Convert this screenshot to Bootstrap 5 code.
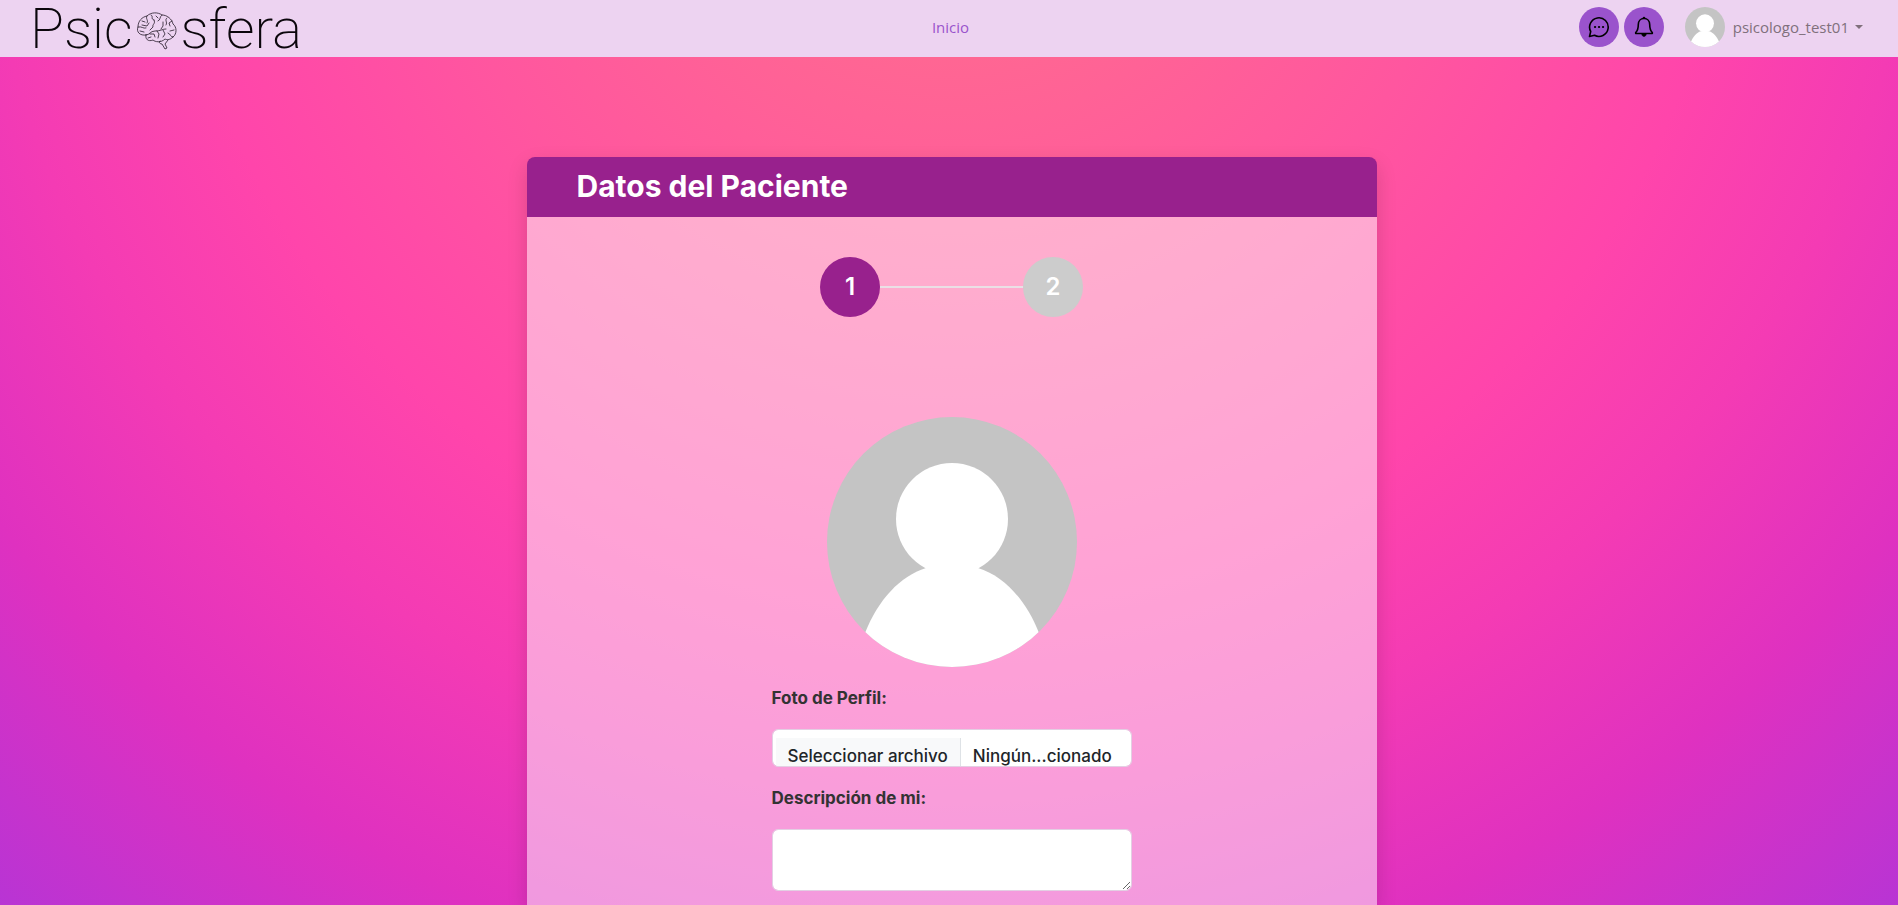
<!DOCTYPE html>
<html lang="es">
<head>
<meta charset="utf-8">
<meta name="viewport" content="width=device-width, initial-scale=1">
<title>Psicosfera - Datos del Paciente</title>
<link href="https://cdn.jsdelivr.net/npm/bootstrap@5.3.0/dist/css/bootstrap.min.css" rel="stylesheet">
<style>
  body {
    font-family: Inter, "Liberation Sans", sans-serif;
    color: #333;
    background: radial-gradient(circle at 50% -20.71%, #ff7480 0, #ff6693 17%, #ff569f 36%, #ff45ab 54%, #f43bb4 67%, #df31c0 82%, #b834d4 100%) fixed;
  }
  .topbar { background: #edd3f1; height: 57px; padding: 0 35px 3px 30px; font-family: "Open Sans", sans-serif; font-size: 15px; }
  .topbar-side { flex: 1 1 0; }
  .brand { color: #0b060c; font-family: Roboto, sans-serif; font-weight: 200; font-size: 56px; line-height: 56px; padding-top: 3px; }
  .brand:hover { color: #0b060c; }
  .brand svg { width: 42px; height: 38px; margin: 4px 3px 0; }
  .link-home { color: #9a53cc; margin-left: 8px; }
  .round-btn { width: 40px; height: 40px; background: #9a53cc; color: #000; }
  .round-btn:hover { background: #8844bb; }
  .round-btn + .round-btn { margin-left: 5px; }
  .user-menu { color: #80707c; font-size: 15px; margin-left: 21px; }
  .user-menu::after { margin-left: 6px; }
  .patient-page { padding-left: 5px; }
  .patient-card { width: 850px; max-width: 100%; margin-top: 100px; border-radius: 8px 8px 0 0; box-shadow: 0 8px 20px rgba(0, 0, 0, .15); overflow: hidden; }
  .patient-head { background: #98218d; min-height: 60px; padding: 0 50px 2px; }
  .patient-head h1 { font-size: 30px; font-weight: 700; }
  .patient-body { background: rgba(255, 255, 255, .5); padding: 40px 50px 14px; }
  .step-dot { width: 60px; height: 60px; background: #ccc; color: #fff; font-size: 24px; font-weight: 600; }
  .step-dot.is-current { background: #98218d; }
  .step-line { width: 143px; height: 2px; background: #eadfe5; }
  .portrait { width: 250px; height: 250px; margin-top: 100px; }
  .patient-form { width: 360px; max-width: 100%; font-size: 17px; padding-top: 19px; }
  .field-label { font-weight: 700; font-size: 17px; line-height: 24px; margin-bottom: 19px; }
  .patient-form .form-control { border-color: #e3cfe3; border-radius: 6px; }
  .file-box { height: 38px; padding: 8px 3px 0; margin-bottom: 19px; cursor: pointer; font-weight: 500; font-size: 17px; overflow: hidden; line-height: 36px; }
  .file-pick { background: #f8f9fa; border-right: 1px solid #dee2e6; padding: 0 12px; color: #212529; }
  .file-name { padding-left: 12px; }
  .about-box { height: 62px; min-height: 62px; }
</style>
</head>
<body class="min-vh-100 d-flex flex-column">

<nav class="topbar d-flex align-items-center" aria-label="Principal">
  <div class="topbar-side d-flex">
    <a class="brand d-flex align-items-center text-decoration-none" href="#">
      <span>Psic</span>
      <svg viewBox="0 0 42 38" fill="none" stroke="#241a28" stroke-width=".8" stroke-linecap="round" stroke-linejoin="round" role="img" aria-label="o">
        <path d="M10 23C4 24 0 20 2 15C2 9 6 5 11 4C15 0 22 0 26 3C31 3 36 7 37 12C41 15 41 22 37 25C34 28 31 28 29 27C25 31 19 30 17 28C12 30 9 27 10 23Z"/>
        <path d="M24 29C22 30 24 32 26 32L29 37L31 36L29 32L32 28M10 23C14 23 14 19 19 19C25 19 26 17 30 17M11 4C9 7 13 8 11 11M2 15C6 14 7 17 10 16M6 9L9 10M4 19L8 20M15 3C18 4 14 7 18 8M26 3C23 5 25 8 22 9M18 8C20 12 16 12 17 15L14 18M27 10L27 14L25 17M31 6C28 8 32 10 30 13M36 9L33 11L34 14M6 13L11 14L13 11M20 4L22 6M14 22L18 22L19 25M21 19L23 22L22 26M27 18L29 22L27 25M37 25C34 25 35 22 32 21M38 18L34 19M12 26L15 25"/>
      </svg>
      <span>sfera</span>
    </a>
  </div>
  <a class="link-home text-decoration-none" href="#">Inicio</a>
  <div class="topbar-side d-flex align-items-center justify-content-end">
    <button type="button" class="round-btn btn rounded-circle border-0 p-0 d-flex align-items-center justify-content-center" aria-label="Mensajes">
      <svg width="22" height="22" viewBox="0 0 22 22" fill="none" stroke="currentColor" stroke-width="1.6" stroke-linecap="round" stroke-linejoin="round">
        <path d="M1.5 20.5L2.7 15.5A9.3 9.3 0 1 1 6.5 19.3Z"/>
        <path d="M7 11H7.1M11 11H11.1M15 11H15.1" stroke-width="2.2"/>
      </svg>
    </button>
    <button type="button" class="round-btn btn rounded-circle border-0 p-0 d-flex align-items-center justify-content-center" aria-label="Notificaciones">
      <svg width="22" height="22" viewBox="0 0 22 22" fill="none" stroke="currentColor" stroke-width="1.6" stroke-linejoin="round">
        <path d="M11 2.500C7.500 2.500 5.300 5 5.300 8.500C5.300 13 4.300 15 2.700 16.500V17.500H19.300V16.500C17.700 15 16.700 13 16.700 8.500C16.700 5 14.500 2.500 11 2.500Z"/>
        <path d="M8.800 18C8.800 21.300 13.200 21.300 13.200 18ZM9.800 2.300C9.800 .7 12.200 .7 12.200 2.300Z" fill="currentColor" stroke-width=".6"/>
      </svg>
    </button>
    <button type="button" class="user-menu btn dropdown-toggle border-0 p-0 d-flex align-items-center" data-bs-toggle="dropdown">
      <svg class="me-2" width="40" height="40" viewBox="0 0 250 250" aria-hidden="true"><use href="#avatar"/></svg>
      psicologo_test01
    </button>
    <ul class="dropdown-menu">
      <li><a class="dropdown-item" href="#">Inicio</a></li>
    </ul>
  </div>
</nav>

<main class="patient-page flex-grow-1 d-flex justify-content-center">
  <section class="patient-card d-flex flex-column">
    <header class="patient-head d-flex align-items-center">
      <h1 class="m-0 text-white">Datos del Paciente</h1>
    </header>
    <div class="patient-body flex-grow-1 d-flex flex-column align-items-center">
      <div class="d-flex align-items-center">
        <div class="step-dot is-current rounded-circle d-flex align-items-center justify-content-center">1</div>
        <div class="step-line"></div>
        <div class="step-dot rounded-circle d-flex align-items-center justify-content-center">2</div>
      </div>
      <svg class="portrait" viewBox="0 0 250 250" role="img" aria-label="Foto de perfil">
        <defs><clipPath id="round"><circle cx="125" cy="125" r="125"/></clipPath></defs>
        <g id="avatar" clip-path="url(#round)">
          <rect width="250" height="250" fill="#c4c4c4"/>
          <circle cx="125" cy="102" r="56" fill="#fff"/>
          <path d="M38 216C51 183 73 159 99 151H151C177 159 199 183 212 216V250H38Z" fill="#fff"/>
        </g>
      </svg>
      <form class="patient-form">
        <label class="field-label d-block" for="foto">Foto de Perfil:</label>
        <input type="file" class="visually-hidden" id="foto">
        <label class="file-box form-control d-flex" for="foto">
          <span class="file-pick">Seleccionar archivo</span>
          <span class="file-name">Ningún...cionado</span>
        </label>
        <label class="field-label d-block" for="descripcion">Descripción de mi:</label>
        <textarea class="about-box form-control" id="descripcion"></textarea>
      </form>
    </div>
  </section>
</main>

<script src="https://cdn.jsdelivr.net/npm/bootstrap@5.3.0/dist/js/bootstrap.bundle.min.js"></script>
</body>
</html>
